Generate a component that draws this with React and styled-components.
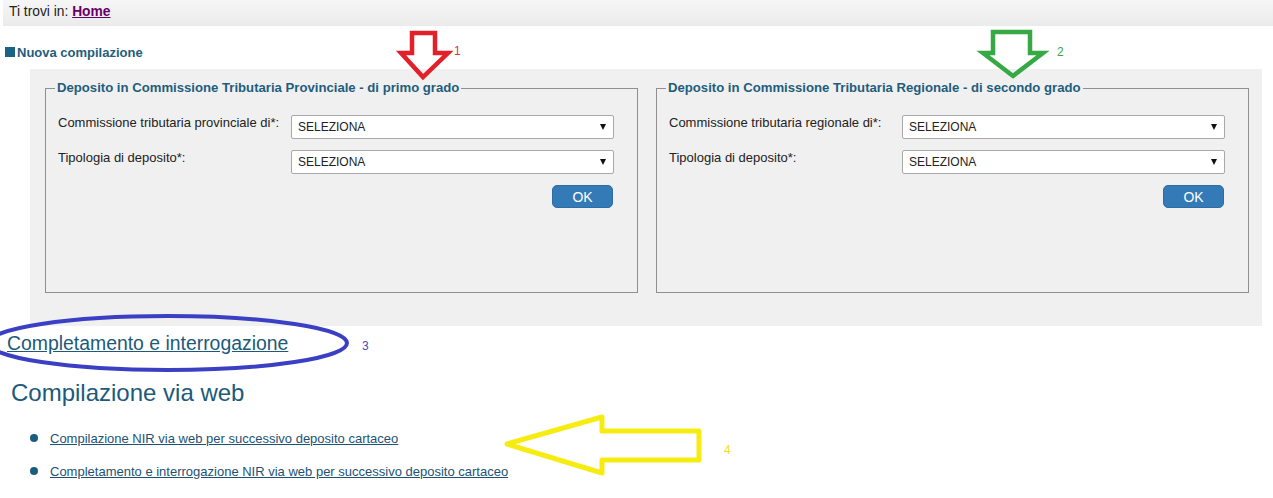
import React from 'react';
import styled, { createGlobalStyle } from 'styled-components';

const GlobalStyle = createGlobalStyle`
  body {
    margin: 0;
    background: #fff;
    font-family: "Liberation Sans", Arial, sans-serif;
    color: #222;
  }
`;

const Page = styled.div`
  position: relative;
  width: 1273px;
  height: 498px;
  overflow: hidden;
`;

const Breadcrumb = styled.div`
  margin-left: 3px;
  height: 26px;
  padding-left: 6px;
  line-height: 24px;
  font-size: 13.8px;
  color: #222;
  background: linear-gradient(#f6f6f6, #ebebeb);
`;

const HomeLink = styled.a`
  color: #660066;
  font-weight: bold;
  text-decoration: underline;
`;

const SectionTitle = styled.div`
  display: flex;
  align-items: center;
  gap: 2px;
  margin-top: 18px;
  padding-left: 5px;
  height: 16px;
  font-size: 13px;
  font-weight: bold;
  color: #1f5d7d;
`;

const Square = styled.span`
  width: 10px;
  height: 10px;
  background: #1a6385;
`;

const Panel = styled.div`
  margin: 9px 0 0 30px;
  width: 1232px;
  height: 257px;
  box-sizing: border-box;
  padding: 11px 14px 0 15px;
  background: #f0f0f0;
  display: grid;
  grid-template-columns: 593px 593px;
  column-gap: 18px;
  align-items: start;
`;

const Fieldset = styled.fieldset`
  margin: 0;
  padding: 0 12px;
  min-width: 0;
  height: 213px;
  box-sizing: border-box;
  border: 1px solid #8f8f8f;
`;

const Legend = styled.legend`
  margin-left: -3px;
  padding: 0 2px;
  font-size: 13.15px;
  line-height: 16px;
  font-weight: bold;
  color: #1f5d7d;
`;

const Form = styled.div`
  display: flex;
  flex-direction: column;
  gap: 11px;
  padding-top: 19px;
`;

const Row = styled.div`
  display: grid;
  grid-template-columns: 233px 323px;
  align-items: start;
`;

const Label = styled.label`
  font-size: 13px;
  line-height: 15px;
  color: #222;
`;

const SelectBox = styled.div`
  height: 24px;
  box-sizing: border-box;
  display: flex;
  align-items: center;
  justify-content: space-between;
  padding: 0 7px 0 6px;
  background: #fff;
  border: 1px solid #a9a9a9;
  border-radius: 2px;
  font-size: 12px;
  color: #222;
`;

const OkButton = styled.button`
  grid-column: 2;
  justify-self: end;
  margin-right: 1px;
  width: 61px;
  height: 23px;
  padding: 0;
  border: 1px solid #2e6da4;
  border-radius: 5px;
  background: #337ab7;
  color: #fff;
  font-family: "Liberation Sans", Arial, sans-serif;
  font-size: 14px;
`;

const BigLink = styled.a`
  display: inline-block;
  margin: 6px 0 0 7px;
  font-size: 19.4px;
  line-height: 22px;
  color: #1d5a7a;
  text-decoration: underline;
`;

const Heading = styled.h2`
  margin: 25px 0 0 11px;
  font-size: 24px;
  line-height: 28px;
  font-weight: normal;
  color: #1d5a7a;
`;

const LinkList = styled.ul`
  list-style: none;
  margin: 23px 0 0;
  padding: 0;
`;

const Item = styled.li`
  display: flex;
  align-items: center;
  gap: 12px;
  padding-left: 30px;
  height: 16px;
  margin-bottom: 17px;

  &::before {
    content: '';
    width: 8px;
    height: 8px;
    border-radius: 50%;
    background: #1a5c7d;
  }
`;

const ItemLink = styled.a`
  font-size: 13px;
  color: #1d5275;
  text-decoration: underline;
`;

const Overlay = styled.svg`
  position: absolute;
  top: 0;
  left: 0;
  pointer-events: none;
`;

const Arrow = () => (
  <svg width="6" height="6" viewBox="0 0 6 6">
    <polygon points="0,0 6,0 3,6" fill="#111" />
  </svg>
);

const Select = () => (
  <SelectBox>
    <span>SELEZIONA</span>
    <Arrow />
  </SelectBox>
);

const DepositForm = ({ title, label }) => (
  <Fieldset>
    <Legend>{title}</Legend>
    <Form>
      <Row>
        <Label>{label}</Label>
        <Select />
      </Row>
      <Row>
        <Label>Tipologia di deposito*:</Label>
        <Select />
      </Row>
      <Row>
        <OkButton>OK</OkButton>
      </Row>
    </Form>
  </Fieldset>
);

const Annotations = () => (
  <Overlay width="1273" height="498" viewBox="0 0 1273 498">
    <path d="M412 33 H435 V53 H448 L423 77 L401 53 H412 Z" fill="none" stroke="#e3202a" strokeWidth="4.5" />
    <text x="454" y="55" fontSize="12" fill="#d8343a" fontFamily="Liberation Sans, Arial, sans-serif">1</text>
    <path d="M993 32 H1030 V53 H1043 L1013 76 L983 53 H993 Z" fill="none" stroke="#36a945" strokeWidth="4.5" />
    <text x="1057" y="56" fontSize="12" fill="#3aa846" fontFamily="Liberation Sans, Arial, sans-serif">2</text>
    <ellipse cx="168" cy="343" rx="179" ry="27" fill="none" stroke="#3b3fc4" strokeWidth="4" />
    <text x="362" y="350" fontSize="12" fill="#4a4ab8" fontFamily="Liberation Sans, Arial, sans-serif">3</text>
    <path d="M507 444 L602 417 V431 H699 V460 H602 V473 Z" fill="none" stroke="#f6ec12" strokeWidth="5" strokeLinejoin="round" />
    <text x="724" y="454" fontSize="12" fill="#f0dc28" fontFamily="Liberation Sans, Arial, sans-serif">4</text>
  </Overlay>
);

export default function App() {
  return (
    <Page>
      <GlobalStyle />
      <Breadcrumb>
        Ti trovi in: <HomeLink>Home</HomeLink>
      </Breadcrumb>
      <SectionTitle>
        <Square />
        Nuova compilazione
      </SectionTitle>
      <Panel>
        <DepositForm
          title="Deposito in Commissione Tributaria Provinciale - di primo grado"
          label="Commissione tributaria provinciale di*:"
        />
        <DepositForm
          title="Deposito in Commissione Tributaria Regionale - di secondo grado"
          label="Commissione tributaria regionale di*:"
        />
      </Panel>
      <BigLink>Completamento e interrogazione</BigLink>
      <Heading>Compilazione via web</Heading>
      <LinkList>
        <Item>
          <ItemLink>Compilazione NIR via web per successivo deposito cartaceo</ItemLink>
        </Item>
        <Item>
          <ItemLink>Completamento e interrogazione NIR via web per successivo deposito cartaceo</ItemLink>
        </Item>
      </LinkList>
      <Annotations />
    </Page>
  );
}
